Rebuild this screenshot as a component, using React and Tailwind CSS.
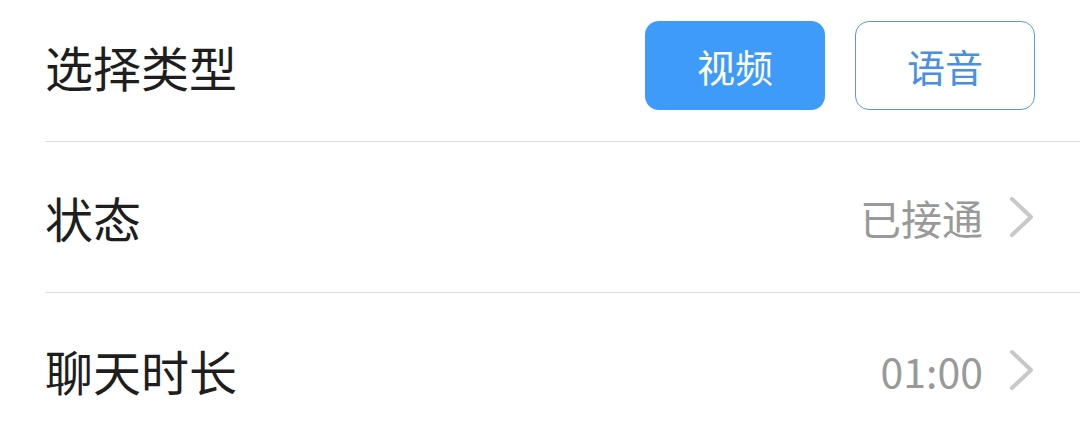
import React, { useState } from 'react';

const font = { fontFamily: '"Noto Sans CJK SC", "Noto Sans", sans-serif' };

const Chevron = () => (
  <svg width="26" height="42" viewBox="0 0 26 42" fill="none" className="ml-[26px]">
    <path d="M3 3 L22 21 L3 39" stroke="#c8c8c8" strokeWidth="4" strokeLinecap="round" strokeLinejoin="round" />
  </svg>
);

const App = () => {
  const [type, setType] = useState('video');

  return (
    <div className="w-[1080px] h-[432px] bg-white overflow-hidden" style={font}>
      <div className="pl-[45px]">
        <div className="h-[142px] pb-[10px] pr-[45px] flex items-center justify-between border-b border-[#dddddd]">
          <span className="text-[48px] text-[#1e1e1e] leading-none">选择类型</span>
          <div className="flex gap-[30px]">
            <button
              onClick={() => setType('video')}
              className={`w-[180px] h-[89px] rounded-[14px] text-[38px] ${type === 'video' ? 'bg-[#3e9bfa] text-white' : 'border border-[#5a9ad8] text-[#4a90e2] bg-white'}`}
            >
              视频
            </button>
            <button
              onClick={() => setType('voice')}
              className={`w-[180px] h-[89px] rounded-[14px] text-[38px] ${type === 'voice' ? 'bg-[#3e9bfa] text-white' : 'border border-[#5a9ad8] text-[#4a90e2] bg-white'}`}
            >
              语音
            </button>
          </div>
        </div>

        <div className="h-[151px] pr-[45px] flex items-center justify-between border-b border-[#dddddd]">
          <span className="text-[48px] text-[#1e1e1e] leading-none">状态</span>
          <div className="flex items-center">
            <span className="text-[41px] text-[#999] leading-none">已接通</span>
            <Chevron />
          </div>
        </div>

        <div className="h-[154px] pr-[45px] flex items-center justify-between">
          <span className="text-[48px] text-[#1e1e1e] leading-none">聊天时长</span>
          <div className="flex items-center">
            <span className="text-[41px] text-[#999] leading-none">01:00</span>
            <Chevron />
          </div>
        </div>
      </div>
    </div>
  );
};

export default App;
